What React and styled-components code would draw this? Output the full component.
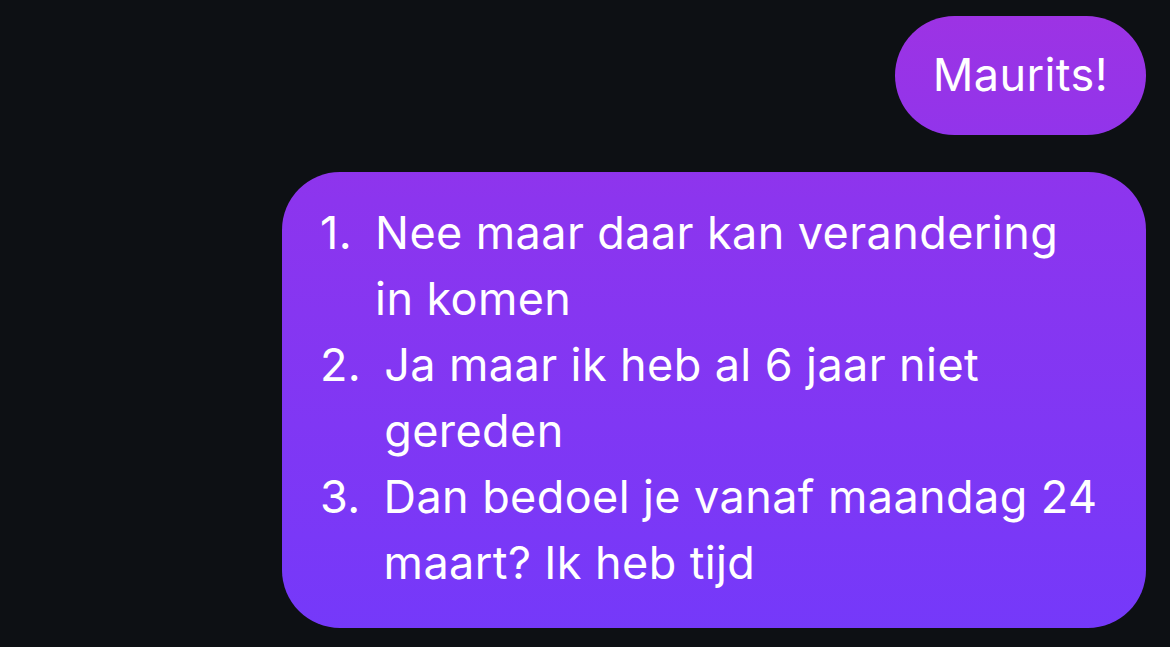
import React from 'react';
import styled, { createGlobalStyle } from 'styled-components';

const GlobalStyle = createGlobalStyle`
  html, body {
    margin: 0;
    padding: 0;
    background: #0d1014;
  }
  body {
    font-family: Inter, "Noto Sans", "Liberation Sans", sans-serif;
    -webkit-font-smoothing: antialiased;
  }
`;

const items = [
  'Nee maar daar kan verandering in komen',
  'Ja maar ik heb al 6 jaar niet gereden',
  'Dan bedoel je vanaf maandag 24 maart? Ik heb tijd',
];

const App = () => {
  return (
    <>
      <GlobalStyle />
      <Thread>
        <Bubble $pill>Maurits!</Bubble>
        <Bubble>
          <List>
            {items.map((text, i) => (
              <Item key={i}>
                <Num>{i + 1}.</Num>
                <ItemText>{text}</ItemText>
              </Item>
            ))}
          </List>
        </Bubble>
      </Thread>
    </>
  );
};

export default App;

const Thread = styled.div`
  min-height: 647px;
  box-sizing: border-box;
  padding: 16px 24px 0 0;
  display: flex;
  flex-direction: column;
  align-items: flex-end;
  gap: 37px;
`;

const Bubble = styled.div`
  box-sizing: border-box;
  color: #fff;
  font-size: 45px;
  line-height: 66px;
  letter-spacing: 0.4px;
  background: linear-gradient(180deg, #9e33e3 0px, #8c35ee 200px, #7439fa 647px) fixed;
  border-radius: ${p => (p.$pill ? '60px' : '58px')};
  padding: ${p => (p.$pill ? '26px 38px 27px' : '28px 46px 32px 38px')};
  height: ${p => (p.$pill ? '119px' : 'auto')};
  width: ${p => (p.$pill ? 'auto' : '864px')};
`;

const List = styled.div`
  display: flex;
  flex-direction: column;
`;

const Item = styled.div`
  display: flex;
  gap: 23px;
`;

const Num = styled.span`
  flex: none;
`;

const ItemText = styled.span`
  flex: 1;
`;
